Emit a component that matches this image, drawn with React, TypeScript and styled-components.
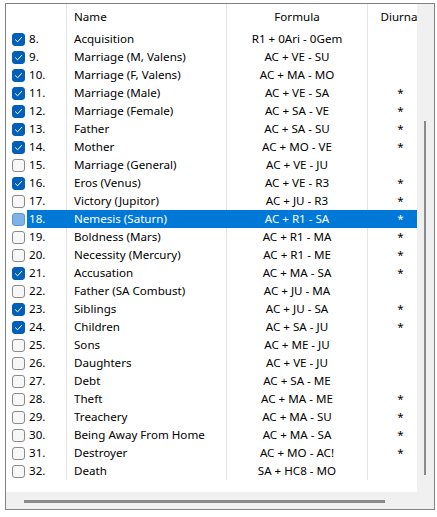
import React from "react";
import styled, { createGlobalStyle } from "styled-components";

const Global = createGlobalStyle`
  html, body { margin: 0; padding: 0; background: #ffffff; }
  body { font-family: "Segoe UI", "Noto Sans", "Liberation Sans", sans-serif; font-size: 11.6px; color: #000; }
`;

type Row = { n: number; on: boolean; name: string; formula: string; diurnal: boolean; sel?: boolean };

const rows: Row[] = [
  { n: 8, on: true, name: "Acquisition", formula: "R1 + 0Ari - 0Gem", diurnal: false },
  { n: 9, on: true, name: "Marriage (M, Valens)", formula: "AC + VE - SU", diurnal: false },
  { n: 10, on: true, name: "Marriage (F, Valens)", formula: "AC + MA - MO", diurnal: false },
  { n: 11, on: true, name: "Marriage (Male)", formula: "AC + VE - SA", diurnal: true },
  { n: 12, on: true, name: "Marriage (Female)", formula: "AC + SA - VE", diurnal: true },
  { n: 13, on: true, name: "Father", formula: "AC + SA - SU", diurnal: true },
  { n: 14, on: true, name: "Mother", formula: "AC + MO - VE", diurnal: true },
  { n: 15, on: false, name: "Marriage (General)", formula: "AC + VE - JU", diurnal: false },
  { n: 16, on: true, name: "Eros (Venus)", formula: "AC + VE - R3", diurnal: true },
  { n: 17, on: false, name: "Victory (Jupitor)", formula: "AC + JU - R3", diurnal: true },
  { n: 18, on: false, name: "Nemesis (Saturn)", formula: "AC + R1 - SA", diurnal: true, sel: true },
  { n: 19, on: false, name: "Boldness (Mars)", formula: "AC + R1 - MA", diurnal: true },
  { n: 20, on: false, name: "Necessity (Mercury)", formula: "AC + R1 - ME", diurnal: true },
  { n: 21, on: true, name: "Accusation", formula: "AC + MA - SA", diurnal: true },
  { n: 22, on: false, name: "Father (SA Combust)", formula: "AC + JU - MA", diurnal: false },
  { n: 23, on: true, name: "Siblings", formula: "AC + JU - SA", diurnal: true },
  { n: 24, on: true, name: "Children", formula: "AC + SA - JU", diurnal: true },
  { n: 25, on: false, name: "Sons", formula: "AC + ME - JU", diurnal: false },
  { n: 26, on: false, name: "Daughters", formula: "AC + VE - JU", diurnal: false },
  { n: 27, on: false, name: "Debt", formula: "AC + SA - ME", diurnal: false },
  { n: 28, on: false, name: "Theft", formula: "AC + MA - ME", diurnal: true },
  { n: 29, on: false, name: "Treachery", formula: "AC + MA - SU", diurnal: true },
  { n: 30, on: false, name: "Being Away From Home", formula: "AC + MA - SA", diurnal: true },
  { n: 31, on: false, name: "Destroyer", formula: "AC + MO - AC!", diurnal: true },
  { n: 32, on: false, name: "Death", formula: "SA + HC8 - MO", diurnal: false },
];

const Frame = styled.div`
  margin: 3px 0 0 5px;
  width: 430px;
  height: 507px;
  box-sizing: border-box;
  border: 1px solid #828282;
  display: grid;
  grid-template-columns: 411px 17px;
  grid-template-rows: 488px 17px;
  background: #f0f0f0;
`;

const Viewport = styled.div`
  background: #ffffff;
  overflow: hidden;
`;

const COLS = "60px 160px 141px 66px";

const HeaderRow = styled.div`
  display: grid;
  grid-template-columns: ${COLS};
  height: 26px;
  width: 427px;
`;

const HeadCell = styled.div<{ $align: "left" | "center"; $sep?: boolean }>`
  display: flex;
  align-items: center;
  justify-content: ${(p) => (p.$align === "center" ? "center" : "flex-start")};
  padding-left: ${(p) => (p.$align === "left" ? "7px" : "0")};
  padding-bottom: 1px;
  border-left: ${(p) => (p.$sep ? "1px solid #e5e5e5" : "none")};
  white-space: nowrap;
  overflow: hidden;
`;

const DataRow = styled.div<{ $sel?: boolean }>`
  display: grid;
  grid-template-columns: ${COLS};
  height: 18px;
  width: 427px;
  color: ${(p) => (p.$sel ? "#ffffff" : "#000000")};
`;

const FirstCell = styled.div`
  display: flex;
  align-items: center;
  padding-left: 6px;
`;

const Num = styled.div<{ $sel?: boolean }>`
  flex: 1;
  align-self: stretch;
  display: flex;
  align-items: center;
  margin-left: 2px;
  padding-left: 2px;
  padding-bottom: 1px;
  background: ${(p) => (p.$sel ? "#0078d7" : "transparent")};
`;

const Cell = styled.div<{ $align: "left" | "center"; $sel?: boolean }>`
  display: flex;
  align-items: center;
  justify-content: ${(p) => (p.$align === "center" ? "center" : "flex-start")};
  padding-left: ${(p) => (p.$align === "left" ? "7px" : "0")};
  padding-bottom: 1px;
  border-left: 1px solid ${(p) => (p.$sel ? "#0078d7" : "#e5e5e5")};
  background: ${(p) => (p.$sel ? "#0078d7" : "transparent")};
  white-space: nowrap;
`;

const Box = styled.div<{ $on: boolean; $sel?: boolean }>`
  width: 13px;
  height: 13px;
  box-sizing: border-box;
  border-radius: 3px;
  flex: none;
  display: flex;
  align-items: center;
  justify-content: center;
  background: ${(p) => (p.$on ? "#005fb8" : p.$sel ? "#7fb3e6" : "#f7f7f7")};
  border: 1px solid ${(p) => (p.$on ? "#005fb8" : p.$sel ? "#5b9ad8" : "#8a8a8a")};
`;

const VScroll = styled.div`
  display: flex;
  flex-direction: column;
  align-items: flex-start;
  padding: 117px 0 0 7px;
`;

const VThumb = styled.div`
  width: 2px;
  height: 354px;
  background: #8a8a8a;
`;

const HScroll = styled.div`
  display: flex;
  align-items: flex-start;
  padding: 8px 0 0 18px;
`;

const HThumb = styled.div`
  width: 361px;
  height: 3px;
  background: #8a8a8a;
`;

const Corner = styled.div`
  background: #f0f0f0;
`;

const Check = () => (
  <svg width="9" height="9" viewBox="0 0 9 9">
    <path d="M1.5 4.8 L3.6 6.8 L7.6 2.4" fill="none" stroke="#ffffff" strokeWidth="1" strokeLinecap="round" strokeLinejoin="round" />
  </svg>
);

export default function App() {
  return (
    <>
      <Global />
      <Frame>
        <Viewport>
          <HeaderRow>
            <HeadCell $align="left" />
            <HeadCell $align="left" $sep>Name</HeadCell>
            <HeadCell $align="center" $sep>Formula</HeadCell>
            <HeadCell $align="center" $sep>Diurnal</HeadCell>
          </HeaderRow>
          {rows.map((r) => (
            <DataRow key={r.n} $sel={r.sel}>
              <FirstCell>
                <Box $on={r.on} $sel={r.sel}>{r.on && <Check />}</Box>
                <Num $sel={r.sel}>{r.n}.</Num>
              </FirstCell>
              <Cell $align="left" $sel={r.sel}>{r.name}</Cell>
              <Cell $align="center" $sel={r.sel}>{r.formula}</Cell>
              <Cell $align="center" $sel={r.sel}>{r.diurnal ? "*" : ""}</Cell>
            </DataRow>
          ))}
        </Viewport>
        <VScroll>
          <VThumb />
        </VScroll>
        <HScroll>
          <HThumb />
        </HScroll>
        <Corner />
      </Frame>
    </>
  );
}
